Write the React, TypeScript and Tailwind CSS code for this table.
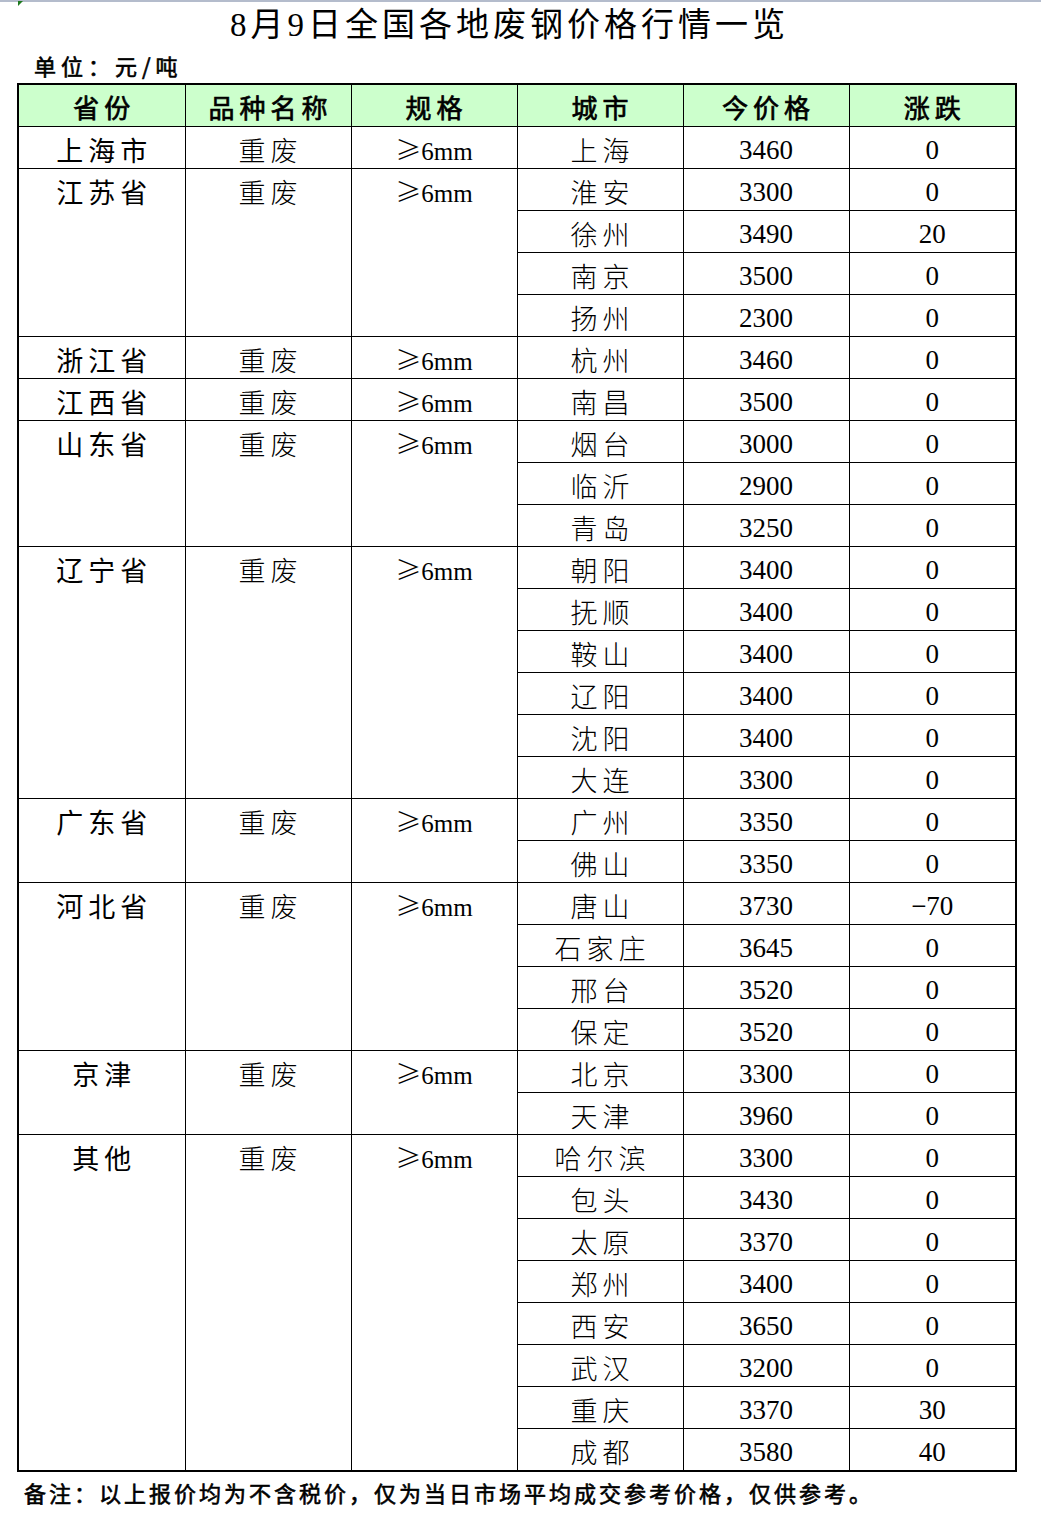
import React from "react";

type Group = {
  province: string;
  cities: [string, string, string][];
};

const groups: Group[] = [
  { province: "上海市", cities: [["上海", "3460", "0"]] },
  {
    province: "江苏省",
    cities: [
      ["淮安", "3300", "0"],
      ["徐州", "3490", "20"],
      ["南京", "3500", "0"],
      ["扬州", "2300", "0"],
    ],
  },
  { province: "浙江省", cities: [["杭州", "3460", "0"]] },
  { province: "江西省", cities: [["南昌", "3500", "0"]] },
  {
    province: "山东省",
    cities: [
      ["烟台", "3000", "0"],
      ["临沂", "2900", "0"],
      ["青岛", "3250", "0"],
    ],
  },
  {
    province: "辽宁省",
    cities: [
      ["朝阳", "3400", "0"],
      ["抚顺", "3400", "0"],
      ["鞍山", "3400", "0"],
      ["辽阳", "3400", "0"],
      ["沈阳", "3400", "0"],
      ["大连", "3300", "0"],
    ],
  },
  {
    province: "广东省",
    cities: [
      ["广州", "3350", "0"],
      ["佛山", "3350", "0"],
    ],
  },
  {
    province: "河北省",
    cities: [
      ["唐山", "3730", "-70"],
      ["石家庄", "3645", "0"],
      ["邢台", "3520", "0"],
      ["保定", "3520", "0"],
    ],
  },
  {
    province: "京津",
    cities: [
      ["北京", "3300", "0"],
      ["天津", "3960", "0"],
    ],
  },
  {
    province: "其他",
    cities: [
      ["哈尔滨", "3300", "0"],
      ["包头", "3430", "0"],
      ["太原", "3370", "0"],
      ["郑州", "3400", "0"],
      ["西安", "3650", "0"],
      ["武汉", "3200", "0"],
      ["重庆", "3370", "30"],
      ["成都", "3580", "40"],
    ],
  },
];

const headers = ["省份", "品种名称", "规格", "城市", "今价格", "涨跌"];

function Spec() {
  return (
    <span>
      <span className="font-['Noto_Sans_CJK_SC',sans-serif] text-[26px] font-light">≥</span>
      <span className="text-[25px]">6mm</span>
    </span>
  );
}

const cjk = "font-['Noto_Sans_CJK_SC',sans-serif]";

export default function App() {
  return (
    <div className="relative w-[1041px] h-[1519px] bg-white text-black font-['Liberation_Serif','Noto_Sans_CJK_SC',serif]">
      {/* excel chrome */}
      <div className="h-[2px] bg-[#b4bccc]" />
      <div className="absolute left-[18px] top-[1px] w-0 h-0 border-t-[5px] border-r-[5px] border-t-[#1f7a1f] border-r-transparent" />

      <div className="h-[46px] flex items-center justify-center pr-[22px] text-[33px] tracking-[4px] leading-none">
        8月9日全国各地废钢价格行情一览
      </div>
      <div className={`h-[35px] flex items-center pl-[34px] text-[22px] tracking-[5px] ${cjk} [-webkit-text-stroke:0.6px_black]`}>
        单位：元/吨
      </div>

      <table className="ml-[17px] w-[998px] table-fixed border-collapse border-2 border-black leading-none">
        <colgroup>
          <col className="w-[167px]" />
          <col className="w-[166px]" />
          <col className="w-[166px]" />
          <col className="w-[166px]" />
          <col className="w-[166px]" />
          <col className="w-[167px]" />
        </colgroup>
        <thead>
          <tr className="bg-[#ccffcc]">
            {headers.map((h) => (
              <th key={h} className="border border-black p-0 font-normal">
                <div className={`h-[41px] pt-[3px] pl-[5px] flex items-center justify-center text-[26px] tracking-[5px] ${cjk} [-webkit-text-stroke:0.7px_black]`}>
                  {h}
                </div>
              </th>
            ))}
          </tr>
        </thead>
        <tbody>
          {groups.map((g) =>
            g.cities.map((c, i) => (
              <tr key={g.province + c[0]}>
                {i === 0 && (
                  <>
                    <td rowSpan={g.cities.length} className="border border-black p-0 align-top">
                      <div className={`h-[41px] pt-[3px] pl-[5px] flex items-center justify-center text-[27px] tracking-[5px] ${cjk}`}>
                        {g.province}
                      </div>
                    </td>
                    <td rowSpan={g.cities.length} className="border border-black p-0 align-top">
                      <div className={`h-[41px] pt-[3px] pl-[5px] flex items-center justify-center text-[27px] font-light tracking-[5px] ${cjk}`}>
                        重废
                      </div>
                    </td>
                    <td rowSpan={g.cities.length} className="border border-black p-0 align-top">
                      <div className="h-[41px] pt-[5px] flex items-center justify-center">
                        <Spec />
                      </div>
                    </td>
                  </>
                )}
                <td className="border border-black p-0">
                  <div className={`h-[41px] pt-[3px] pl-[5px] flex items-center justify-center text-[27px] font-light tracking-[5px] ${cjk}`}>
                    {c[0]}
                  </div>
                </td>
                <td className="border border-black p-0">
                  <div className="h-[41px] pt-[5px] flex items-center justify-center text-[27px]">{c[1]}</div>
                </td>
                <td className="border border-black p-0">
                  <div className="h-[41px] pt-[5px] flex items-center justify-center text-[27px]">
                    {c[2].startsWith("-") ? "−" + c[2].slice(1) : c[2]}
                  </div>
                </td>
              </tr>
            ))
          )}
        </tbody>
      </table>

      <div className={`h-[40px] flex items-center pl-[24px] text-[22px] tracking-[3px] ${cjk} [-webkit-text-stroke:0.6px_black]`}>
        备注：以上报价均为不含税价，仅为当日市场平均成交参考价格，仅供参考。
      </div>
    </div>
  );
}
